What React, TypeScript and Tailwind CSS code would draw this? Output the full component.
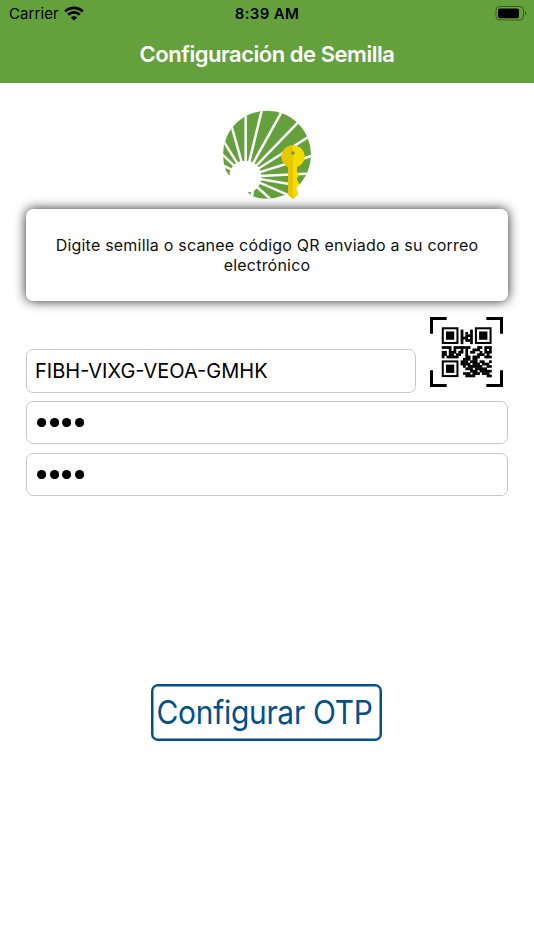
const rays = [
  [92, 34], [142, 12], [202, 20], [252, 52], [288, 94], [296, 154], [296, 208],
  [292, 252], [236, 280], [178, 296], [48, 60], [22, 106], [12, 142], [12, 178],
];

const finders = [[0, 0], [14, 0], [0, 14]];

// data modules only, the three finders are drawn on top
const qrRows = [
  "000000000000000000000",
  "000000001000100000000",
  "000000001010100000000",
  "000000001011100000000",
  "000000001110100000000",
  "000000001011100000000",
  "000000001000100000000",
  "000000000000000000000",
  "111101111111000110111",
  "000101001010011100101",
  "110111011010110010111",
  "110110110010000111010",
  "101111100011011100111",
  "000000000111011000000",
  "000000001110111011001",
  "000000001111011101110",
  "000000000101111110011",
  "000000000011101111100",
  "000000000000111011111",
  "000000000111011101110",
  "000000000011110000011",
];

function StatusBar() {
  return (
    <div className="grid h-7 grid-cols-3 items-center text-black">
      <div className="flex items-center gap-[5px] pl-[9px]">
        <span className="text-[15px] leading-5 tracking-[0.1px]">Carrier</span>
        <svg className="-mt-[2px]" width="20" height="15" viewBox="0 0 20 15" fill="none" stroke="currentColor" strokeWidth="2.7">
          <path d="M1.2 5.4C6.2.7 13.8.7 18.8 5.4" />
          <path d="M4.2 8.7c3.3-3 8.3-3 11.6 0" />
          <path d="M10 14.5 6.8 11.4c1.8-1.7 4.6-1.7 6.4 0Z" fill="currentColor" stroke="none" />
        </svg>
      </div>
      <span className="text-center text-[15px] font-semibold leading-5 tracking-[0.35px]">8:39 AM</span>
      <svg className="-mt-[2px] mr-[7px] justify-self-end" width="32" height="16" viewBox="0 0 32 16">
        <rect x="1" y="1.5" width="27.5" height="13.5" rx="3.8" fill="none" stroke="#000" strokeOpacity=".42" />
        <rect x="3" y="3.5" width="21" height="9.7" rx="1.8" />
        <path d="M30 6c1.500.8 1.500 3.700 0 4.500Z" fillOpacity=".5" />
      </svg>
    </div>
  );
}

function Logo() {
  return (
    <svg width="104" height="104" viewBox="0 0 312 312">
      <defs>
        <clipPath id="disc">
          <circle cx="156" cy="152" r="132" />
        </clipPath>
      </defs>
      <g clipPath="url(#disc)">
        <rect width="312" height="312" fill="#64a13d" />
        {rays.map(([x, y]) => (
          <path key={`${x}-${y}`} d={`M92 218 ${x} ${y}`} stroke="#fff" strokeWidth="7.5" />
        ))}
      </g>
      <path d="M92 170c28 0 47 21 47 48 0 18-8 32-21 41l-8 45H0V206h44c5-22 23-36 48-36Z" fill="#fff" />
      <path d="M36 207h9l-2 7ZM98 263l10 2-2 8Z" fill="#64a13d" />
      <path d="M234 124c19 0 35 15 35 33 0 15-9 27-23 32v14l5 4v9l-5 5v8l5 5v9l-6 5v10l4 5v9l-14 13-16-13v-83c-11-5-19-17-19-32 0-18 15-33 34-33Z" fill="#f5dc00" />
      <path d="M234 124v161l-15-13v-83c-11-5-19-17-19-32 0-18 15-33 34-33Z" fill="#e7c700" />
      <circle cx="234" cy="147" r="5.5" fill="#64a13d" />
    </svg>
  );
}

function QrIcon() {
  return (
    <svg width="73" height="70" viewBox="0 0 219 210">
      <path d="M4.5 50V4.5H50M169 4.5h45.5V50M214.5 160v45.5H169M50 205.5H4.5V160" fill="none" stroke="#000" strokeWidth="9" />
      <g transform="translate(35.5 31) scale(7.1)">
        {qrRows.map((row, y) =>
          [...row].map((cell, x) =>
            cell === "1" ? <rect key={`${x}-${y}`} x={x - 0.05} y={y - 0.05} width="1.15" height="1.15" /> : null
          )
        )}
        {finders.map(([x, y]) => (
          <g key={`f${x}-${y}`}>
            <rect x={x + 0.4} y={y + 0.4} width="6.2" height="6.2" fill="none" stroke="#000" strokeWidth=".85" />
            <rect x={x + 1.75} y={y + 1.75} width="3.5" height="3.5" />
          </g>
        ))}
      </g>
    </svg>
  );
}

function PinField() {
  return (
    <div className="flex h-[43px] items-center gap-[3.4px] rounded-[7px] border border-[#c8c8c8] pl-[10px]">
      {[0, 1, 2, 3].map((i) => (
        <svg key={i} width="9.2" height="9.2" viewBox="0 0 10 10">
          <circle cx="5" cy="5" r="5" />
        </svg>
      ))}
    </div>
  );
}

export default function App() {
  return (
    <div className="flex h-[950px] w-[534px] flex-col overflow-hidden bg-white font-['Inter','Liberation_Sans',sans-serif]">
      <header className="h-[83px] shrink-0 bg-[#64a13d]">
        <StatusBar />
        <h1 className="pt-[10px] text-center text-[22px] font-semibold leading-8 tracking-[-0.47px] text-white">
          Configuración de Semilla
        </h1>
      </header>

      <main className="flex flex-col px-[26px] pt-[21px]">
        <div className="flex justify-center">
          <Logo />
        </div>
        <div className="mt-px flex h-[92px] items-center justify-center rounded-[7px] bg-white shadow-[0_0_12px_rgba(0,0,0,0.85)]">
          <p className="w-[440px] text-center text-[16px] leading-5 tracking-[0.21px] text-[#111]">
            Digite semilla o scanee código QR enviado a su correo electrónico
          </p>
        </div>

        <div className="mt-4 flex items-end">
          <div className="flex h-11 w-[390px] items-center rounded-[7px] border border-[#c8c8c8] pl-2 text-[20px] text-black">
            FIBH-VIXG-VEOA-GMHK
          </div>
          <div className="mb-[6px] ml-[14px]">
            <QrIcon />
          </div>
        </div>
        <div className="mt-2 flex flex-col gap-[9px]">
          <PinField />
          <PinField />
        </div>

        <button className="mt-[188px] flex h-[57px] w-[231px] -translate-x-px items-center justify-center self-center whitespace-nowrap rounded-[7px] border-2 border-[#00508a] text-[32px] leading-none text-[#00508a] shadow-[inset_0_0_0_0.5px_#00508a]">
          <span className="-translate-x-px scale-x-[0.935] tracking-[-0.3px]">Configurar OTP</span>
        </button>
      </main>
    </div>
  );
}
